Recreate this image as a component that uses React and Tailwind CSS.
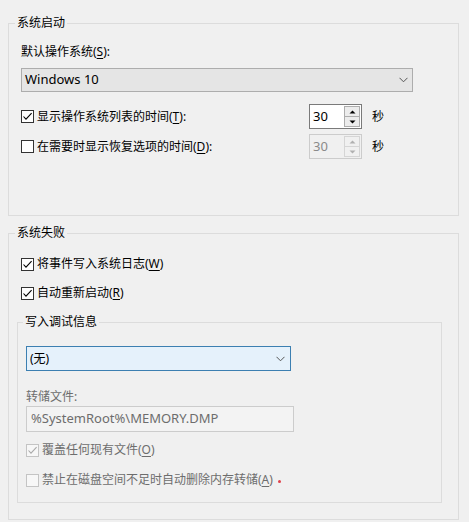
import React from "react";

const font = "font-['Noto_Sans','Noto_Sans_CJK_SC',sans-serif]";

function K({ c }) {
  return <span className="underline underline-offset-[2px]">{c}</span>;
}

function Check({ checked, disabled }) {
  return (
    <span
      className={`flex h-[13px] w-[13px] shrink-0 items-center justify-center border ${
        disabled ? "border-[#c4c4c4] bg-[#f7f7f7]" : "border-[#333333] bg-white"
      }`}
    >
      {checked && (
        <svg width="11" height="11" viewBox="0 0 11 11">
          <path d="M1.5 5.5 L4 8.2 L9.6 2.2" fill="none" stroke={disabled ? "#a9a9a9" : "#000"} strokeWidth="1.1" />
        </svg>
      )}
    </span>
  );
}

function CheckRow({ checked, disabled, children }) {
  return (
    <div className={`flex h-4 items-center gap-[3px] ${disabled ? "text-[#6d6d6d]" : "text-black"}`}>
      <Check checked={checked} disabled={disabled} />
      <span className="leading-4">{children}</span>
    </div>
  );
}

function Chevron() {
  return (
    <svg width="9" height="6" viewBox="0 0 9 6">
      <path d="M0.5 0.8 L4.5 4.8 L8.5 0.8" fill="none" stroke="#555" strokeWidth="1" />
    </svg>
  );
}

function Arrow({ up, color }) {
  return (
    <svg width="7" height="4" viewBox="0 0 7 4">
      <path d={up ? "M0.5 3.5 L3.5 0.5 L6.5 3.5 Z" : "M0.5 0.5 L3.5 3.5 L6.5 0.5 Z"} fill={color} />
    </svg>
  );
}

function Spin({ disabled }) {
  const btn = disabled ? "border-[#d5d5d5] bg-[#f0f0f0]" : "border-[#adadad] bg-[#ececec]";
  const arrow = disabled ? "#b0b0b0" : "#000";
  return (
    <div className={`flex h-[25px] w-[53px] border ${disabled ? "border-[#cccccc] bg-[#f0f0f0]" : "border-[#7a7a7a] bg-white"}`}>
      <span className={`flex-1 pl-[3px] text-[13px] leading-[23px] ${disabled ? "text-[#8a8a8a]" : "text-black"}`}>30</span>
      <div className="flex w-[17px] flex-col py-[1px] pr-[1px]">
        <span className={`flex flex-1 items-center justify-center border ${btn}`}>
          <Arrow up color={arrow} />
        </span>
        <span className={`flex flex-1 items-center justify-center border border-t-0 ${btn}`}>
          <Arrow color={arrow} />
        </span>
      </div>
    </div>
  );
}

export default function App() {
  return (
    <div className={`${font} h-[522px] w-[469px] overflow-hidden bg-[#f0f0f0] pl-2 pt-[15px] text-[12px] text-black`}>
      {/* 系统启动 */}
      <fieldset className="w-[451px] border border-[#dcdcdc] p-0">
        <legend className="ml-[6px] px-[2px] leading-4">系统启动</legend>
        <div className="px-3 pb-[56px] pt-[13px]">
          <div className="h-4 leading-4">
            默认操作系统(<K c="S" />):
          </div>
          <div className="mt-2 flex h-[24px] w-[392px] items-center justify-between border border-[#adadad] bg-[#e5e5e5] pl-[3px] pr-[4px]">
            <span className="text-[13px]">Windows 10</span>
            <Chevron />
          </div>
          <div className="mt-3 flex items-center">
            <div className="w-[288px]">
              <CheckRow checked>
                显示操作系统列表的时间(<K c="T" />):
              </CheckRow>
            </div>
            <Spin />
            <span className="ml-[10px] leading-4">秒</span>
          </div>
          <div className="mt-[5px] flex items-center">
            <div className="w-[288px]">
              <CheckRow>
                在需要时显示恢复选项的时间(<K c="D" />):
              </CheckRow>
            </div>
            <Spin disabled />
            <span className="ml-[10px] leading-4">秒</span>
          </div>
        </div>
      </fieldset>

      {/* 系统失败 */}
      <fieldset className="mt-[9px] w-[451px] border border-[#dcdcdc] p-0">
        <legend className="ml-[6px] px-[2px] leading-4">系统失败</legend>
        <div className="pb-[16px] pl-2 pt-[15px]">
          <div className="pl-1">
            <CheckRow checked>
              将事件写入系统日志(<K c="W" />)
            </CheckRow>
          </div>
          <div className="mt-[13px] pl-1">
            <CheckRow checked>
              自动重新启动(<K c="R" />)
            </CheckRow>
          </div>

          <fieldset className="mt-[13px] w-[425px] border border-[#dcdcdc] p-0">
            <legend className="ml-[5px] px-[2px] leading-4">写入调试信息</legend>
            <div className="pb-[14px] pl-2 pt-4">
              <div className="flex h-[25px] w-[265px] items-center justify-between border border-[#3c7fb1] bg-[#e5f1fb] pl-[3px] pr-[5px]">
                <span>(无)</span>
                <Chevron />
              </div>
              <div className="mt-[18px] h-4 leading-4 text-[#6d6d6d]">转储文件:</div>
              <div className="mt-[1px] flex h-[26px] w-[268px] items-center border border-[#cccccc] bg-[#f3f3f3] pl-[4px] text-[13px] text-[#6d6d6d]">
                %SystemRoot%\MEMORY.DMP
              </div>
              <div className="mt-[10px]">
                <CheckRow checked disabled>
                  覆盖任何现有文件(<K c="O" />)
                </CheckRow>
              </div>
              <div className="mt-[14px] flex items-center">
                <CheckRow disabled>
                  禁止在磁盘空间不足时自动删除内存转储(<K c="A" />)
                </CheckRow>
                <span className="ml-[5px] mt-[3px] h-[3px] w-[3px] rounded-full bg-[#e0404a]" />
              </div>
            </div>
          </fieldset>
        </div>
      </fieldset>
    </div>
  );
}
